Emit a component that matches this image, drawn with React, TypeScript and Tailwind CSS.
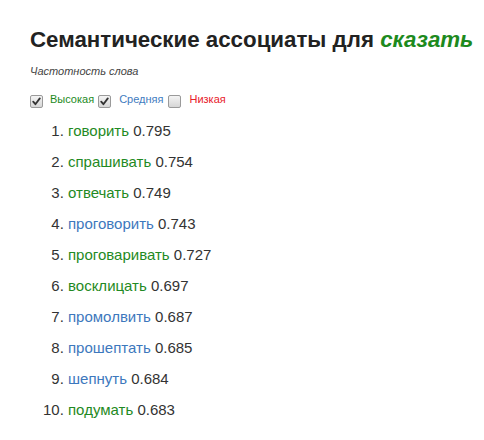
import React from "react";

const items: { w: string; s: string; c: "g" | "b" }[] = [
  { w: "говорить", s: "0.795", c: "g" },
  { w: "спрашивать", s: "0.754", c: "g" },
  { w: "отвечать", s: "0.749", c: "g" },
  { w: "проговорить", s: "0.743", c: "b" },
  { w: "проговаривать", s: "0.727", c: "g" },
  { w: "восклицать", s: "0.697", c: "g" },
  { w: "промолвить", s: "0.687", c: "b" },
  { w: "прошептать", s: "0.685", c: "b" },
  { w: "шепнуть", s: "0.684", c: "b" },
  { w: "подумать", s: "0.683", c: "g" },
];

function Box({ checked }: { checked: boolean }) {
  return (
    <span className="mt-[2px] flex h-[13px] w-[13px] shrink-0 items-center justify-center rounded-[2px] border border-[#9a9a9a] bg-gradient-to-b from-[#f4f4f4] to-[#d6d6d6]">
      {checked && (
        <svg width="9" height="9" viewBox="0 0 9 9">
          <path d="M1.2 4.6 L3.4 7.2 L7.8 1.4" fill="none" stroke="#333" strokeWidth="1.8" strokeLinecap="round" strokeLinejoin="round" />
        </svg>
      )}
    </span>
  );
}

export default function App() {
  return (
    <div className="min-h-[440px] w-[484px] overflow-hidden bg-white pl-[30px] pt-[27px] text-[#333]" style={{ fontFamily: '"Liberation Sans", Arial, sans-serif' }}>
      <h1 className="whitespace-nowrap text-[22.3px] font-bold leading-[25px] text-[#222]">
        Семантические ассоциаты для <i className="text-[#1d8a1d]">сказать</i>
      </h1>
      <div className="mt-[13px] text-[11px] italic leading-[13px] text-[#444]">Частотность слова</div>
      <div className="mt-[15px] flex items-start text-[11px] leading-[13px]">
        <Box checked />
        <span className="ml-[7px] text-[#1d8a1d]">Высокая</span>
        <span className="ml-[4px]" />
        <Box checked />
        <span className="ml-[8px] text-[#3f7cc0]">Средняя</span>
        <span className="ml-[5px]" />
        <Box checked={false} />
        <span className="ml-[8px] text-[#e8202a]">Низкая</span>
      </div>
      <ol className="mt-[7px] list-decimal pl-[38px] text-[15px] leading-[31px] marker:text-[#333]">
        {items.map((it) => (
          <li key={it.w}>
            <span className={it.c === "g" ? "text-[#1f8a24]" : "text-[#3d78bd]"}>{it.w}</span> {it.s}
          </li>
        ))}
      </ol>
      <div className="mt-[15px] h-[2px] bg-[#eeeeee]" />
    </div>
  );
}
